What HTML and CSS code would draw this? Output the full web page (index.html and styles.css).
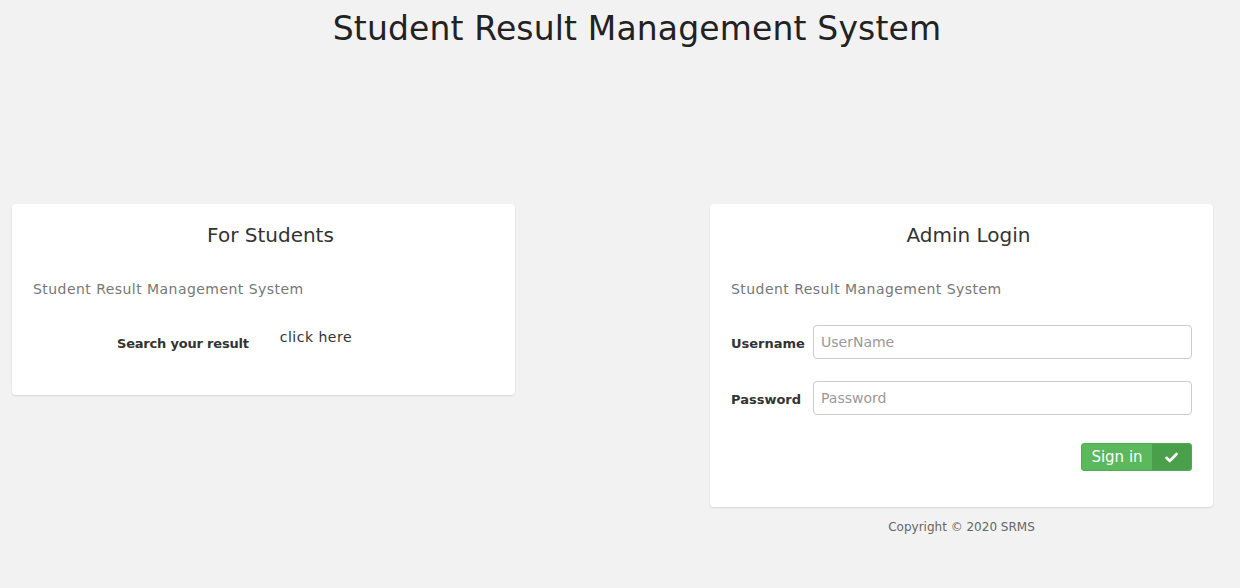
FILE: index.html
```html
<!DOCTYPE html>
<html>
<head>
    <meta charset="utf-8">
    <title>Student Result Management System</title>
    <link rel="stylesheet" href="styles.css">
</head>
<body>
    <h1 class="baslik">Student Result Management System</h1>

    <div class="satir">
        <div class="kart kart-ogrenci">
            <h3 class="kart-baslik">For Students</h3>
            <p class="alt-yazi">Student Result Management System</p>
            <div class="arama">
                <span class="arama-etiket">Search your result</span>
                <a class="arama-link" href="#">click here</a>
            </div>
        </div>

        <div class="sag">
            <div class="kart kart-admin">
                <h3 class="kart-baslik">Admin Login</h3>
                <p class="alt-yazi">Student Result Management System</p>
                <form class="form">
                    <div class="alan">
                        <label class="etiket">Username</label>
                        <input class="girdi" type="text" placeholder="UserName">
                    </div>
                    <div class="alan">
                        <label class="etiket">Password</label>
                        <input class="girdi" type="password" placeholder="Password">
                    </div>
                    <div class="buton-satir">
                        <button class="buton" type="button">
                            <span class="buton-yazi">Sign in</span>
                            <span class="buton-ikon">
                                <svg width="13" height="11" viewBox="0 0 13 11"><path d="M1.5 5.8 L4.8 9 L11.5 2" fill="none" stroke="#fff" stroke-width="2.6" stroke-linecap="round" stroke-linejoin="round"/></svg>
                            </span>
                        </button>
                    </div>
                </form>
            </div>
            <p class="telif">Copyright © 2020 SRMS</p>
        </div>
    </div>
</body>
</html>
```

FILE: styles.css
```css
* {box-sizing: border-box;}
body {
    margin: 0;
    background-color: #f2f2f2;
    font-family: "DejaVu Sans", sans-serif;
    color: #333;}

.baslik {
    margin: 0;
    padding-top: 10px;
    padding-left: 34px;
    text-align: center;
    font-size: 33px;
    font-weight: 400;
    letter-spacing: 0.15px;
    line-height: 38px;
    color: #222;}

.satir {
    display: flex;
    justify-content: space-between;
    padding: 0 27px 0 12px;
    margin-top: 156px;}

.kart {
    width: 503px;
    background-color: #fff;
    border-radius: 4px;
    box-shadow: 0 1px 2px rgba(0,0,0,0.12);
    padding: 20px 21px;}
.kart-ogrenci {height: 191px; align-self: flex-start;}
.kart-admin {height: 303px;}

.kart-baslik {
    margin: 0;
    padding-left: 14px;
    text-align: center;
    font-size: 20px;
    font-weight: 400;
    line-height: 22px;
    color: #333;}

.alt-yazi {
    margin: 34px 0 0;
    font-size: 14px;
    letter-spacing: 0.45px;
    line-height: 18px;
    color: #777;}

.arama {
    display: flex;
    align-items: flex-start;
    margin-top: 30px;
    padding-left: 84px;}
.arama-etiket {
    font-size: 13px;
    font-weight: bold;
    letter-spacing: -0.2px;
    margin-top: 8px;
    color: #333;}
.arama-link {
    font-size: 14px;
    letter-spacing: 0.5px;
    color: #333;
    text-decoration: none;
    margin-left: 31px;
    margin-top: 1px;}

.form {margin-top: 27px;}
.alan {
    display: flex;
    align-items: center;
    margin-bottom: 22px;}
.etiket {
    width: 82px;
    font-size: 13px;
    font-weight: bold;
    color: #333;
    padding-top: 3px;}
.girdi {
    flex: 1;
    height: 34px;
    border: 1px solid #ccc;
    border-radius: 4px;
    padding: 6px 7px;
    font-family: inherit;
    font-size: 14px;
    color: #555;}
.girdi::placeholder {color: #999;}

.buton-satir {display: flex; justify-content: flex-end; margin-top: 28px;}
.buton {
    display: flex;
    height: 28px;
    padding: 0;
    border: 1px solid #4cae4c;
    border-radius: 3px;
    background-color: #5cb85c;
    color: #fff;
    font-family: inherit;
    font-size: 15px;
    white-space: nowrap;
    overflow: hidden;}
.buton-yazi {
    display: flex;
    align-items: center;
    justify-content: center;
    width: 70px;}
.buton-ikon {
    display: flex;
    align-items: center;
    justify-content: center;
    width: 39px;
    background-color: #4a9f4a;}

.telif {
    margin: 13px 0 0;
    text-align: center;
    font-size: 12px;
    color: #666;}
```
